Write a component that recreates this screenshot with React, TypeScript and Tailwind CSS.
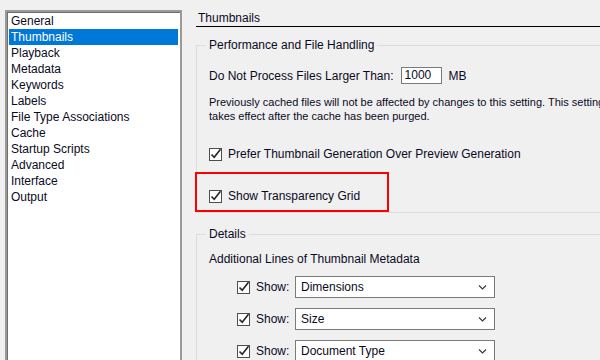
import React from 'react';

const categories = [
  'General',
  'Thumbnails',
  'Playback',
  'Metadata',
  'Keywords',
  'Labels',
  'File Type Associations',
  'Cache',
  'Startup Scripts',
  'Advanced',
  'Interface',
  'Output',
];

const metadataLines = ['Dimensions', 'Size', 'Document Type'];

const CheckBox: React.FC = () => (
  <svg width="13" height="13" viewBox="0 0 13 13" className="shrink-0 overflow-visible">
    <rect x="0.5" y="0.5" width="12" height="12" fill="#ffffff" stroke="#4d4d4d" />
    <path d="M2.5 6.5 L5.2 9.3 L11.5 1.2" fill="none" stroke="#262626" strokeWidth="1.6" />
  </svg>
);

const Chevron: React.FC = () => (
  <svg width="9" height="5" viewBox="0 0 9 5" className="shrink-0">
    <path d="M1 0.5 L4.5 4 L8 0.5" fill="none" stroke="#333333" strokeWidth="1.1" />
  </svg>
);

const App: React.FC = () => {
  return (
    <div className="w-[600px] h-[360px] overflow-hidden bg-[#f0f0f0] flex font-['Liberation_Sans',sans-serif] text-[12px] text-[#0a0a1e]">
      <div className="ml-[5px] mt-[10px] w-[177px] h-[400px] shrink-0 bg-white border-2 border-[#9a9a9a] shadow-[inset_1px_1px_0_#6e6e6e] pt-[1px] px-[2px]">
        {categories.map((c) => (
          <div
            key={c}
            className={
              c === 'Thumbnails'
                ? 'h-[16px] leading-[16px] pl-[2px] bg-[#0078d7] text-white'
                : 'h-[16px] leading-[16px] pl-[2px]'
            }
          >
            {c}
          </div>
        ))}
      </div>

      <div className="ml-[14px] w-[430px] shrink-0 flex flex-col">
        <div className="h-[27px] pt-[10px] pl-[2px] leading-[16px] border-b border-black">Thumbnails</div>

        <fieldset className="mt-[10px] border border-[#dcdcdc] p-0 m-0 min-w-0">
          <legend className="ml-[9px] px-[3px] leading-[16px]">Performance and File Handling</legend>

          <div className="mt-[14px] pl-[12px] flex items-center h-[17px]">
            <span>Do Not Process Files Larger Than:</span>
            <div className="ml-[7px] w-[41px] h-[17px] bg-white border border-[#7a7a7a] pl-[3px] leading-[15px]">1000</div>
            <span className="ml-[7px]">MB</span>
          </div>

          <p className="mt-[11px] pl-[12px] text-[11px] leading-[14px] whitespace-nowrap">
            Previously cached files will not be affected by changes to this setting. This setting
            <br />
            takes effect after the cache has been purged.
          </p>

          <div className="mt-[23px] pl-[12px] flex items-center gap-[6px] h-[16px]">
            <CheckBox />
            <span>Prefer Thumbnail Generation Over Preview Generation</span>
          </div>

          <div className="mt-[10px] -ml-[2px] w-[194px] h-[40px] border-2 border-[#ff0000] pl-[12px] pt-[14px]">
            <div className="flex items-center gap-[6px] h-[16px]">
              <CheckBox />
              <span>Show Transparency Grid</span>
            </div>
          </div>
        </fieldset>

        <fieldset className="mt-[13px] border border-[#dcdcdc] p-0 m-0 min-w-0 h-[200px]">
          <legend className="ml-[9px] px-[3px] leading-[16px]">Details</legend>

          <div className="mt-[9px] pl-[12px] leading-[16px]">Additional Lines of Thumbnail Metadata</div>

          <div className="mt-[9px] pl-[40px] flex flex-col gap-[10px]">
            {metadataLines.map((m) => (
              <div key={m} className="flex items-center h-[22px]">
                <CheckBox />
                <span className="ml-[6px] w-[34px]">Show:</span>
                <div className="ml-[5px] w-[200px] h-[22px] bg-white border border-[#7a7a7a] flex items-center justify-between pl-[5px] pr-[7px]">
                  <span>{m}</span>
                  <Chevron />
                </div>
              </div>
            ))}
          </div>
        </fieldset>
      </div>
    </div>
  );
};

export default App;
